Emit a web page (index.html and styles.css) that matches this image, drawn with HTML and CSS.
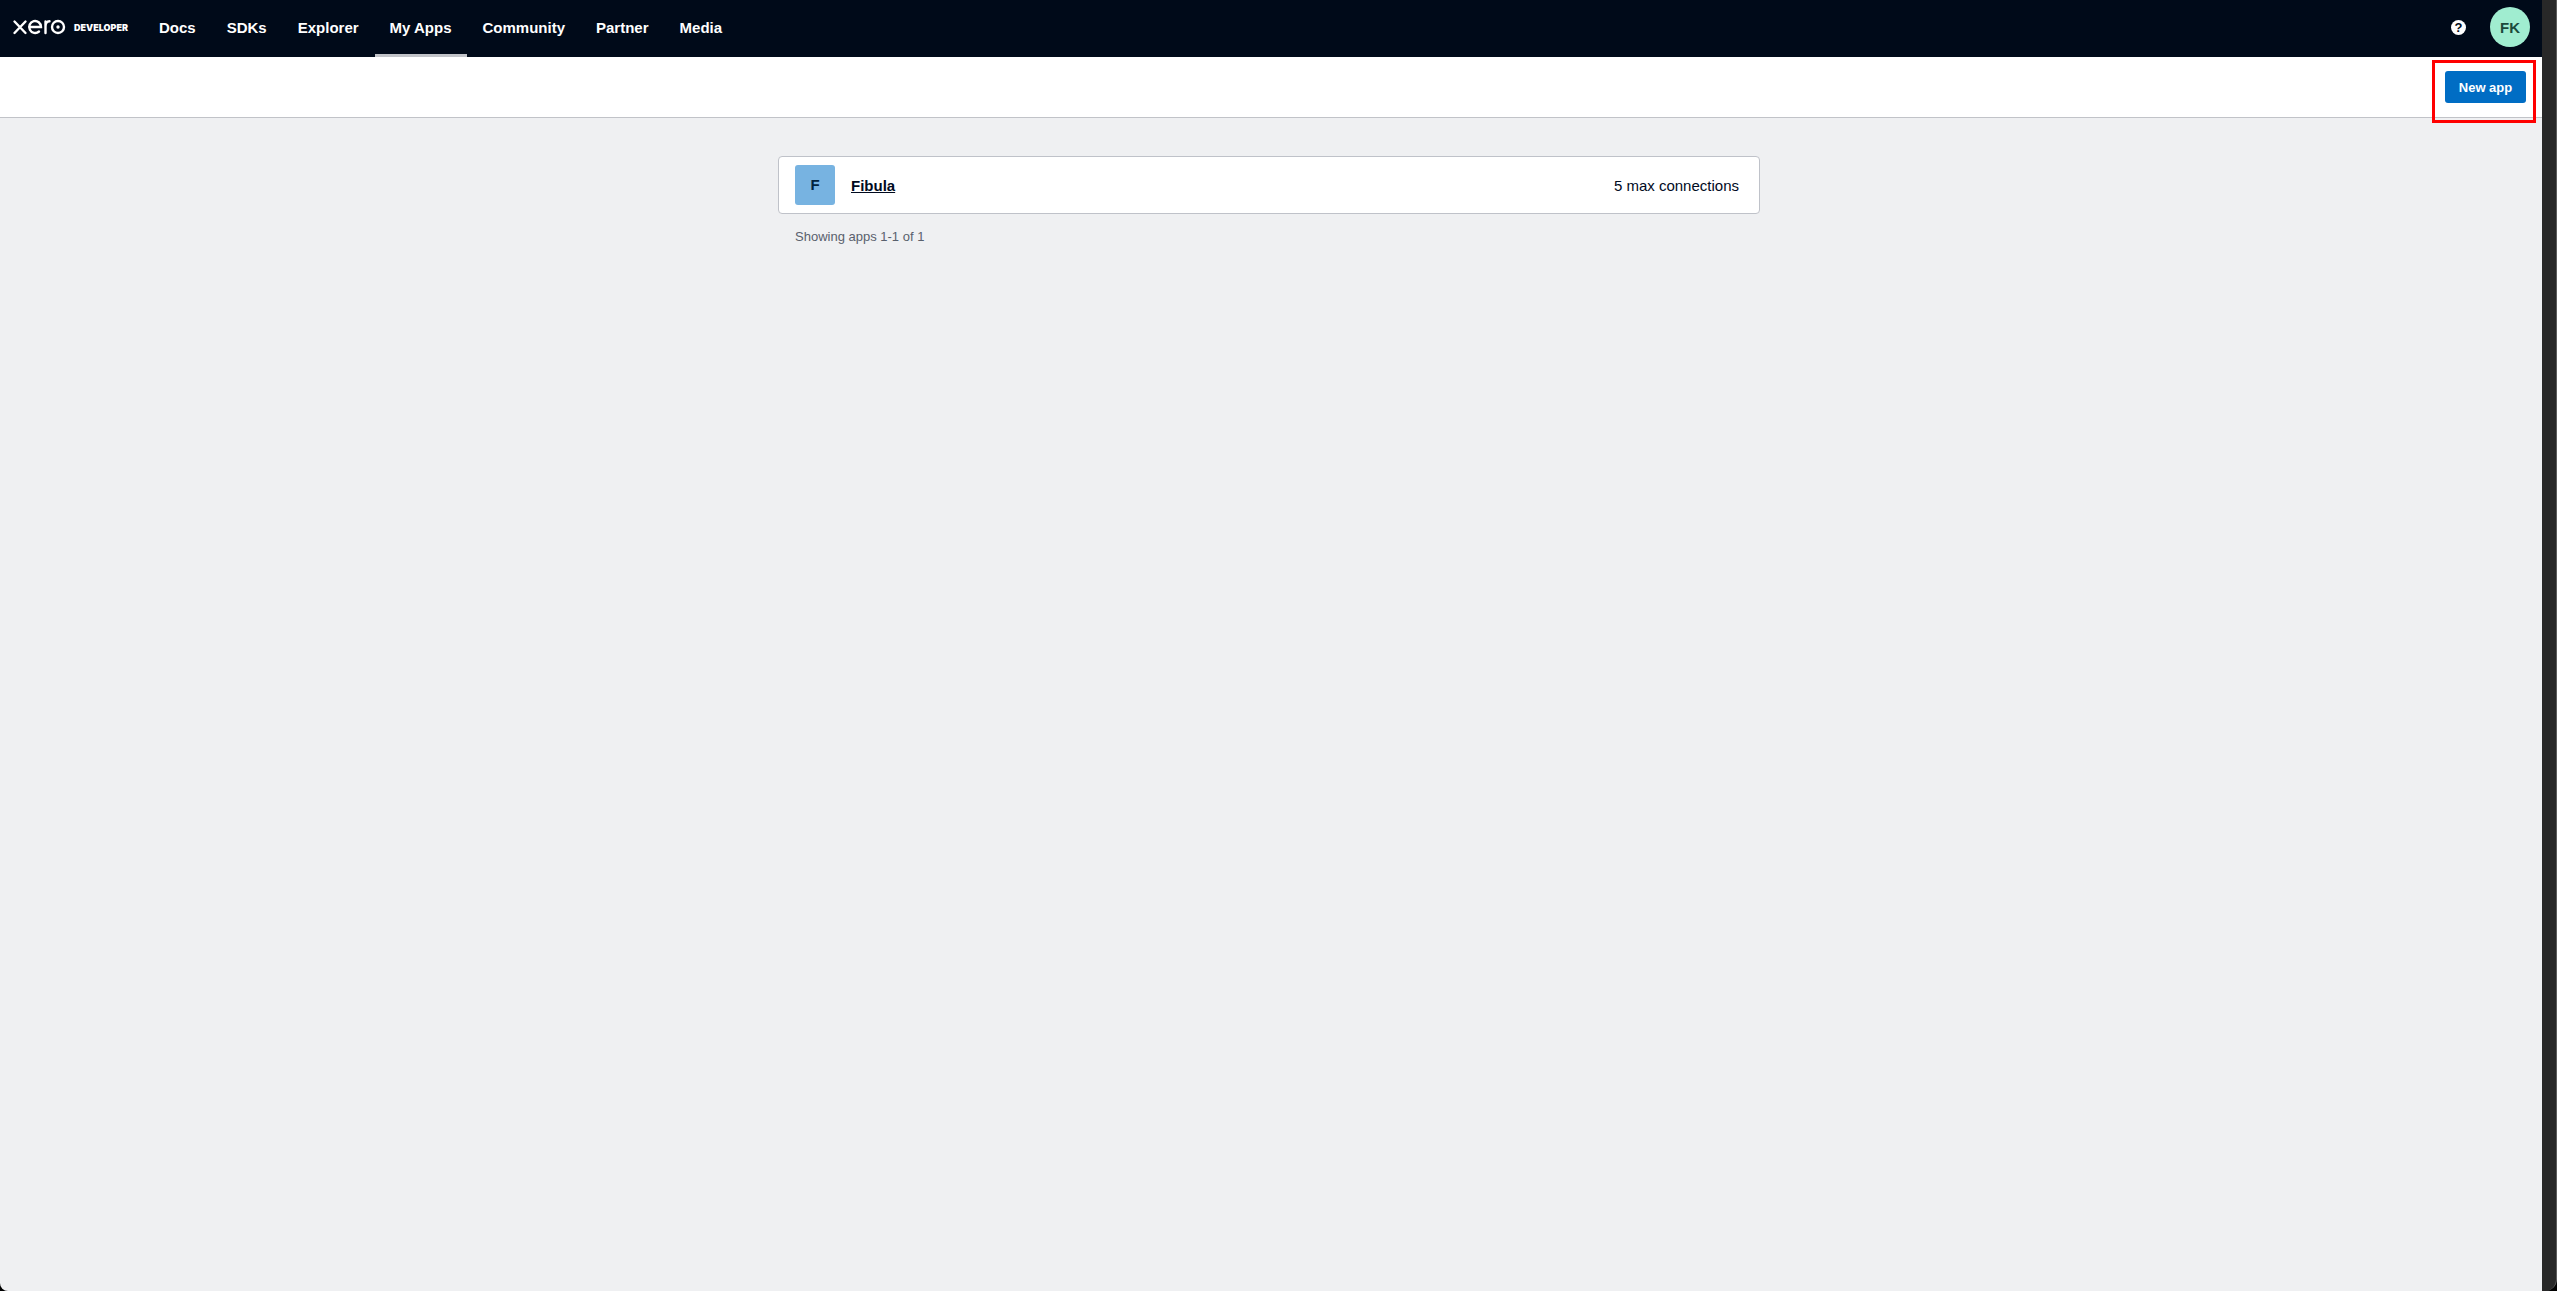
FILE: index.html
```
<!DOCTYPE html>
<html lang="en">
<head>
    <meta charset="UTF-8">
    <meta name="viewport" content="width=device-width, initial-scale=1.0">
    <title>My Apps - Xero Developer</title>
    <link rel="stylesheet" href="styles.css">
</head>
<body>
    <div class="window">
        <div class="page">
            <header class="header">
                <a class="logo" href="#" aria-label="Xero Developer">
                    <svg class="logo-mark" viewBox="0 0 54 18" width="54" height="18" fill="none" stroke="#fff" stroke-width="2.4" stroke-linecap="round" aria-hidden="true">
                        <path d="M2.500 3.500 13.500 15M13.500 3.500 2.500 15"/>
                        <path d="M17.500 9H29A5.900 6 0 1 0 27 13.500"/>
                        <path d="M33.500 15V3.500M33.500 8.500Q33.500 3.500 37.500 3.300"/>
                        <circle cx="46" cy="9" r="6"/>
                        <circle cx="46" cy="9" r="1.700" fill="#fff" stroke="none"/>
                    </svg>
                    <span class="logo-text">DEVELOPER</span>
                </a>
                <nav class="nav">
                    <a href="#">Docs</a>
                    <a href="#">SDKs</a>
                    <a href="#">Explorer</a>
                    <a class="active" href="#">My Apps</a>
                    <a href="#">Community</a>
                    <a href="#">Partner</a>
                    <a href="#">Media</a>
                </nav>
                <div class="account">
                    <button class="help" aria-label="Help">?</button>
                    <button class="avatar" aria-label="Account">FK</button>
                </div>
            </header>
            <div class="toolbar">
                <div class="highlight">
                    <button class="new-app">New app</button>
                </div>
            </div>
            <main class="content">
                <div class="app-list">
                    <div class="app-card">
                        <span class="app-icon">F</span>
                        <a class="app-name" href="#">Fibula</a>
                        <span class="connections">5 max connections</span>
                    </div>
                    <p class="summary">Showing apps 1-1 of 1</p>
                </div>
            </main>
        </div>
    </div>
</body>
</html>
```
FILE: styles.css
```
* {
    box-sizing: border-box;
}

body {
    margin: 0;
    background: #000;
    font-family: "Liberation Sans", Arial, sans-serif;
    font-size: 15px;
    color: #000a1e;
}

button {
    font-family: inherit;
    font-weight: bold;
    border: none;
    padding: 0;
    cursor: pointer;
}

.window {
    min-height: 100vh;
    display: flex;
    background: #282828;
    padding-right: 14px;
    border-right: 1px solid #5c5c5c;
    border-radius: 0 0 12px 8px;
    overflow: hidden;
}

.page {
    flex: 1;
    background: #eff0f2;
}

.header {
    height: 57px;
    display: flex;
    align-items: stretch;
    background: #000a19;
    padding: 0 12px;
}

.logo {
    display: flex;
    align-items: center;
    gap: 8px;
    width: 132px;
    padding-bottom: 3px;
    color: #fff;
    text-decoration: none;
}

.logo-text {
    font-family: Inter, sans-serif;
    font-size: 9px;
    font-weight: 900;
}

.nav {
    display: flex;
    gap: 1px;
    flex: 1;
}

.nav a {
    display: flex;
    align-items: center;
    padding: 0 15px;
    border-bottom: 3px solid transparent;
    color: #fff;
    font-weight: bold;
    text-decoration: none;
}

.nav a.active {
    border-bottom-color: #c1c3c8;
}

.account {
    display: flex;
    align-items: center;
    gap: 24px;
    padding-bottom: 3px;
}

.help {
    width: 15px;
    height: 15px;
    border-radius: 50%;
    background: #fff;
    color: #000a19;
    font-size: 13px;
    line-height: 15px;
}

.avatar {
    width: 40px;
    height: 40px;
    border-radius: 50%;
    background: #a0edd0;
    color: #1c4a3c;
    font-size: 15px;
}

.toolbar {
    height: 61px;
    display: flex;
    justify-content: flex-end;
    padding: 3px 6px 0;
    background: #fff;
    border-bottom: 1px solid #c1c3c8;
}

/* frame runs over the toolbar's bottom border */
.highlight {
    width: 104px;
    height: 63px;
    padding: 8px 7px 0 10px;
    border: 3px solid #f00;
}

.new-app {
    width: 81px;
    height: 32px;
    border-radius: 3px;
    background: #006dc4;
    color: #fff;
    font-size: 13px;
}

.content {
    padding: 38px 4px 0 0;
}

.app-list {
    max-width: 982px;
    margin: 0 auto;
}

.app-card {
    height: 58px;
    display: flex;
    align-items: center;
    padding: 0 20px 0 16px;
    border: 1px solid #bfc2c9;
    border-radius: 4px;
    background: #fff;
}

.app-icon {
    width: 40px;
    height: 40px;
    border-radius: 3px;
    background: #77b3e1;
    color: #00243f;
    font-weight: bold;
    line-height: 40px;
    text-align: center;
}

.app-name {
    margin-left: 16px;
    color: inherit;
    font-weight: bold;
}

.connections {
    margin-left: auto;
}

.summary {
    margin: 15px 17px;
    color: #59606d;
    font-size: 13px;
    line-height: 16px;
}
```
